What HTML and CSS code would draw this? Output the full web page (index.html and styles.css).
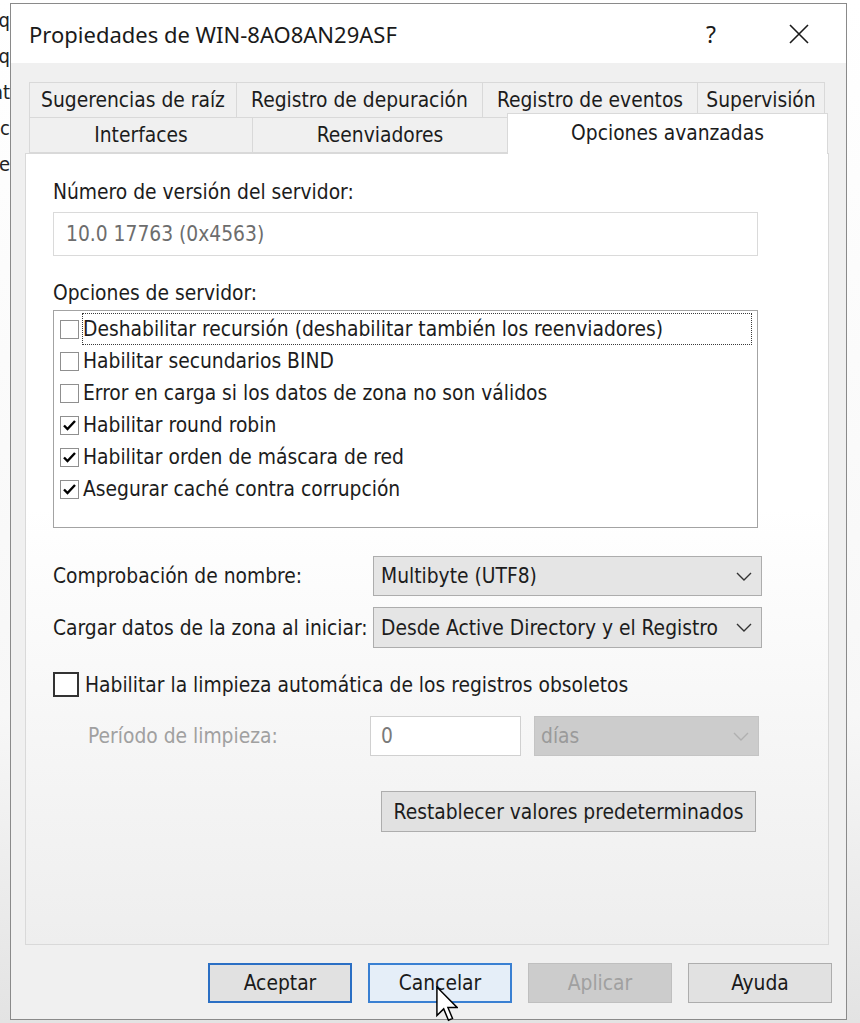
FILE: index.html
```html
<!DOCTYPE html>
<html lang="es">
<head>
<meta charset="utf-8">
<title>Propiedades de WIN-8AO8AN29ASF</title>
<link rel="stylesheet" href="styles.css">
</head>
<body>
<div class="desk">
  <div class="behind">
    <div class="bline">q</div>
    <div class="bline">q</div>
    <div class="bline">nt</div>
    <div class="bline">c</div>
    <div class="bline">le</div>
  </div>
  <div class="window">
    <div class="titlebar">
      <span class="title">Propiedades de WIN-8AO8AN29ASF</span>
      <span class="tb-help">?</span>
      <span class="tb-close">
        <svg width="20" height="20" viewBox="0 0 20 20"><path d="M1 1 L19 19 M19 1 L1 19" stroke="#1a1a1a" stroke-width="1.6" fill="none"/></svg>
      </span>
    </div>
    <div class="client">
      <div class="tabrow row1">
        <div class="tab w-sug">Sugerencias de raíz</div>
        <div class="tab w-dep">Registro de depuración</div>
        <div class="tab w-eve">Registro de eventos</div>
        <div class="tab w-sup">Supervisión</div>
      </div>
      <div class="tabrow row2">
        <div class="tab w-int">Interfaces</div>
        <div class="tab w-ree">Reenviadores</div>
        <div class="tab sel w-opc">Opciones avanzadas</div>
      </div>
      <div class="panel">
        <div class="lbl">Número de versión del servidor:</div>
        <div class="textbox">10.0 17763 (0x4563)</div>
        <div class="lbl lbl2">Opciones de servidor:</div>
        <div class="listbox">
          <div class="item"><span class="lcb"></span><span class="itxt focus">Deshabilitar recursión (deshabilitar también los reenviadores)</span></div>
          <div class="item"><span class="lcb"></span><span class="itxt">Habilitar secundarios BIND</span></div>
          <div class="item"><span class="lcb"></span><span class="itxt">Error en carga si los datos de zona no son válidos</span></div>
          <div class="item"><span class="lcb"><svg width="17" height="17" viewBox="0 0 17 17"><path d="M3 8.5 L6.5 12 L14 4" stroke="#000" stroke-width="2.4" fill="none"/></svg></span><span class="itxt">Habilitar round robin</span></div>
          <div class="item"><span class="lcb"><svg width="17" height="17" viewBox="0 0 17 17"><path d="M3 8.5 L6.5 12 L14 4" stroke="#000" stroke-width="2.4" fill="none"/></svg></span><span class="itxt">Habilitar orden de máscara de red</span></div>
          <div class="item"><span class="lcb"><svg width="17" height="17" viewBox="0 0 17 17"><path d="M3 8.5 L6.5 12 L14 4" stroke="#000" stroke-width="2.4" fill="none"/></svg></span><span class="itxt">Asegurar caché contra corrupción</span></div>
        </div>
        <div class="crow crow1">
          <span class="clbl">Comprobación de nombre:</span>
          <div class="combo"><span>Multibyte (UTF8)</span><svg class="chev" width="16" height="9" viewBox="0 0 16 9"><path d="M1 1 L8 8 L15 1" stroke="#333" stroke-width="1.4" fill="none"/></svg></div>
        </div>
        <div class="crow crow2">
          <span class="clbl">Cargar datos de la zona al iniciar:</span>
          <div class="combo"><span>Desde Active Directory y el Registro</span><svg class="chev" width="16" height="9" viewBox="0 0 16 9"><path d="M1 1 L8 8 L15 1" stroke="#333" stroke-width="1.4" fill="none"/></svg></div>
        </div>
        <div class="cbrow">
          <span class="bigcb"></span>
          <span>Habilitar la limpieza automática de los registros obsoletos</span>
        </div>
        <div class="prow">
          <span class="plbl">Período de limpieza:</span>
          <div class="pinput">0</div>
          <div class="pcombo"><span>días</span><svg class="chev" width="16" height="9" viewBox="0 0 16 9"><path d="M1 1 L8 8 L15 1" stroke="#b0b0b0" stroke-width="1.4" fill="none"/></svg></div>
        </div>
        <div class="resetbtn">Restablecer valores predeterminados</div>
      </div>
      <div class="buttons">
        <div class="btn default">Aceptar</div>
        <div class="btn hover">Cancelar</div>
        <div class="btn disabled">Aplicar</div>
        <div class="btn">Ayuda</div>
      </div>
    </div>
  </div>
</div>
<svg class="cursor" width="22" height="37" viewBox="0 0 12 20"><path d="M0.5 0.5 L0.5 16 L4.2 12.4 L6.8 18.6 L9 17.6 L6.5 11.6 L11.5 11.6 Z" fill="#fff" stroke="#000" stroke-width="0.8" stroke-linejoin="miter"/></svg>
</body>
</html>
```
FILE: styles.css
```css
* { box-sizing: border-box; }
html, body { margin: 0; padding: 0; }
body {
  width: 860px;
  height: 1023px;
  overflow: hidden;
  position: relative;
  background: linear-gradient(#ffffff 0%, #f7f7f7 70%, #e3e3e3 100%);
  font-family: "DejaVu Sans Condensed", "DejaVu Sans", sans-serif;
  font-size: 20.8px;
  color: #1c1c1c;
}
.desk { display: flex; align-items: flex-start; }

.behind {
  width: 10px;
  overflow: hidden;
  padding-top: 2px;
  font-size: 20px;
  color: #222;
}
.bline {
  height: 36px;
  line-height: 36px;
  display: flex;
  justify-content: flex-end;
  white-space: nowrap;
}

.window {
  width: 837px;
  height: 1017px;
  margin-top: 3px;
  border: 1px solid #8a8a8a;
  background: #f0f0f0;
  display: flex;
  flex-direction: column;
}
.titlebar {
  height: 59px;
  background: #ffffff;
  display: flex;
  align-items: center;
  padding-left: 18px;
}
.title {
  font-family: "Noto Sans", "Open Sans", sans-serif;
  font-size: 22px;
  color: #1a1a1a;
}
.tb-help {
  margin-left: auto;
  width: 46px;
  text-align: center;
  font-family: "Noto Sans", sans-serif;
  font-size: 23px;
  color: #1a1a1a;
}
.tb-close {
  width: 46px;
  margin-left: 42px;
  margin-right: 24px;
  display: flex;
  justify-content: center;
}

.client {
  flex: 1;
  padding: 19px 0 0 14px;
  display: flex;
  flex-direction: column;
}
.tabrow { display: flex; margin-left: 4px; }
.row1 { height: 35px; }
.row2 { height: 36px; }
.tab {
  border: 1px solid #d9d9d9;
  margin-right: -1px;
  background: #f0f0f0;
  display: flex;
  align-items: center;
  justify-content: center;
  white-space: nowrap;
}
.row1 .tab { border-bottom: none; }
.w-sug { width: 208px; }
.w-dep { width: 247px; }
.w-eve { width: 216px; }
.w-sup { width: 128px; }
.w-int { width: 224px; }
.w-ree { width: 256px; }
.w-opc { width: 321px; }
.tab.sel {
  position: relative;
  z-index: 2;
  background: #ffffff;
  height: 41px;
  margin-top: -4px;
  border-bottom: none;
  padding-bottom: 3px;
}

.panel {
  width: 804px;
  height: 792px;
  border: 1px solid #d9d9d9;
  background: linear-gradient(#ffffff 0%, #ffffff 45%, #eeeeee 100%);
  padding: 26px 0 0 27px;
}
.lbl { height: 24px; line-height: 24px; white-space: nowrap; }
.textbox {
  margin-top: 8px;
  width: 705px;
  height: 44px;
  border: 1px solid #dadada;
  background: #ffffff;
  padding-left: 12px;
  display: flex;
  align-items: center;
  color: #6d6d6d;
}
.lbl2 { margin-top: 25px; }
.listbox {
  margin-top: 5px;
  width: 705px;
  height: 218px;
  border: 1px solid #a3a3a3;
  background: #ffffff;
  padding: 2px 5px 0 6px;
}
.item {
  height: 32px;
  display: flex;
  align-items: center;
}
.lcb {
  width: 19px;
  height: 19px;
  border: 1px solid #8f8f8f;
  background: #ffffff;
  margin-right: 3px;
  display: flex;
  align-items: center;
  justify-content: center;
  flex: none;
}
.itxt {
  height: 32px;
  display: flex;
  align-items: center;
  border: 1px solid transparent;
  white-space: nowrap;
}
.itxt.focus {
  flex: 1;
  border: 1px dotted #3a3a3a;
}

.crow { display: flex; align-items: center; }
.crow1 { margin-top: 28px; height: 40px; }
.crow2 { margin-top: 11px; height: 41px; }
.clbl { width: 320px; white-space: nowrap; }
.combo {
  width: 389px;
  height: 100%;
  background: #e5e5e5;
  border: 1px solid #adadad;
  display: flex;
  align-items: center;
  justify-content: space-between;
  padding: 0 9px 0 7px;
  white-space: nowrap;
}
.chev { flex: none; }

.cbrow {
  margin-top: 24px;
  height: 25px;
  display: flex;
  align-items: center;
  white-space: nowrap;
}
.bigcb {
  width: 26px;
  height: 25px;
  border: 2px solid #333333;
  background: #ffffff;
  margin-right: 6px;
  flex: none;
}

.prow {
  margin-top: 19px;
  height: 40px;
  display: flex;
  align-items: center;
  color: #a0a0a0;
}
.plbl { width: 282px; margin-left: 35px; white-space: nowrap; }
.pinput {
  width: 151px;
  height: 40px;
  border: 1px solid #d0d0d0;
  background: #ffffff;
  padding-left: 10px;
  display: flex;
  align-items: center;
  color: #7a7a7a;
}
.pcombo {
  width: 225px;
  height: 40px;
  margin-left: 13px;
  background: #cccccc;
  border: 1px solid #c4c4c4;
  display: flex;
  align-items: center;
  justify-content: space-between;
  padding: 0 9px 0 6px;
  color: #9a9a9a;
}

.resetbtn {
  margin-top: 35px;
  margin-left: 328px;
  width: 375px;
  height: 41px;
  background: #e1e1e1;
  border: 1px solid #adadad;
  display: flex;
  align-items: center;
  justify-content: center;
  white-space: nowrap;
}

.buttons {
  margin-top: 18px;
  display: flex;
  justify-content: flex-end;
  gap: 16px;
  padding-right: 14px;
}
.btn {
  width: 144px;
  height: 40px;
  background: #e1e1e1;
  border: 1px solid #adadad;
  display: flex;
  align-items: center;
  justify-content: center;
  color: #1a1a1a;
}
.btn.default { border: 2px solid #2b6fc4; }
.btn.hover { border: 2px solid #3a80d2; background: #e5eef8; }
.btn.disabled { background: #cccccc; border-color: #bfbfbf; color: #a0a0a0; }

.cursor {
  position: absolute;
  left: 436px;
  top: 986px;
}
```
